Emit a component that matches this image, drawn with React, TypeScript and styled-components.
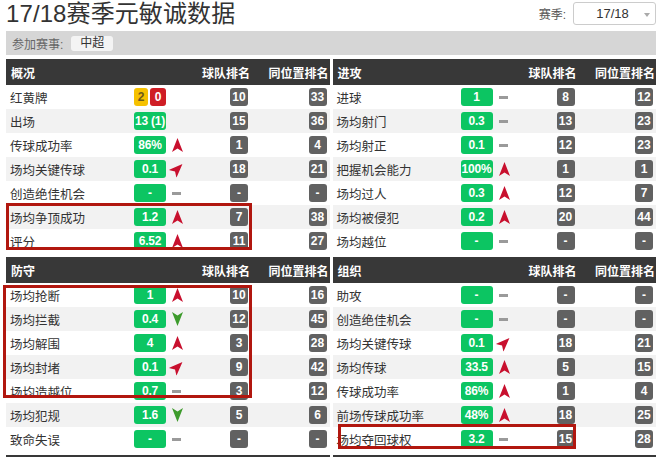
import styled, { createGlobalStyle } from 'styled-components'

type Trend = 'up' | 'down' | 'diag' | 'flat' | 'none'

interface Stat {
    label: string
    value?: string
    cards?: [string, string]
    trend: Trend
    team: string
    pos: string
}

interface Box {
    top: number
    left: number
    width: number
    height: number
}

interface Section {
    title: string
    stats: Stat[]
    highlight?: Box
}

const sections: Section[] = [
    {
        title: '概况',
        highlight: { top: 144, left: 0, width: 246, height: 47 },
        stats: [
            { label: '红黄牌', cards: ['2', '0'], trend: 'none', team: '10', pos: '33' },
            { label: '出场', value: '13 (1)', trend: 'none', team: '15', pos: '36' },
            { label: '传球成功率', value: '86%', trend: 'up', team: '1', pos: '4' },
            { label: '场均关键传球', value: '0.1', trend: 'diag', team: '18', pos: '21' },
            { label: '创造绝佳机会', value: '-', trend: 'flat', team: '-', pos: '-' },
            { label: '场均争顶成功', value: '1.2', trend: 'up', team: '7', pos: '38' },
            { label: '评分', value: '6.52', trend: 'up', team: '11', pos: '27' },
        ],
    },
    {
        title: '进攻',
        stats: [
            { label: '进球', value: '1', trend: 'flat', team: '8', pos: '12' },
            { label: '场均射门', value: '0.3', trend: 'flat', team: '13', pos: '23' },
            { label: '场均射正', value: '0.1', trend: 'flat', team: '12', pos: '23' },
            { label: '把握机会能力', value: '100%', trend: 'up', team: '1', pos: '1' },
            { label: '场均过人', value: '0.3', trend: 'up', team: '12', pos: '7' },
            { label: '场均被侵犯', value: '0.2', trend: 'up', team: '20', pos: '44' },
            { label: '场均越位', value: '-', trend: 'flat', team: '-', pos: '-' },
        ],
    },
    {
        title: '防守',
        highlight: { top: 28, left: -3, width: 249, height: 113 },
        stats: [
            { label: '场均抢断', value: '1', trend: 'up', team: '10', pos: '16' },
            { label: '场均拦截', value: '0.4', trend: 'down', team: '12', pos: '45' },
            { label: '场均解围', value: '4', trend: 'up', team: '3', pos: '28' },
            { label: '场均封堵', value: '0.1', trend: 'diag', team: '9', pos: '42' },
            { label: '场均造越位', value: '0.7', trend: 'flat', team: '3', pos: '12' },
            { label: '场均犯规', value: '1.6', trend: 'down', team: '5', pos: '6' },
            { label: '致命失误', value: '-', trend: 'flat', team: '-', pos: '-' },
        ],
    },
    {
        title: '组织',
        highlight: { top: 167, left: 5, width: 238, height: 25 },
        stats: [
            { label: '助攻', value: '-', trend: 'flat', team: '-', pos: '-' },
            { label: '创造绝佳机会', value: '-', trend: 'flat', team: '-', pos: '-' },
            { label: '场均关键传球', value: '0.1', trend: 'diag', team: '18', pos: '21' },
            { label: '场均传球', value: '33.5', trend: 'up', team: '5', pos: '15' },
            { label: '传球成功率', value: '86%', trend: 'up', team: '1', pos: '4' },
            { label: '前场传球成功率', value: '48%', trend: 'up', team: '18', pos: '25' },
            { label: '场均夺回球权', value: '3.2', trend: 'flat', team: '15', pos: '28' },
        ],
    },
]

// global
const GlobalStyle = createGlobalStyle`
    html, body {
        margin: 0;
        padding: 0;
        overflow: hidden;
        background: #fff;
    }
    body {
        font-family: "Liberation Sans", "Noto Sans CJK SC", Arial, sans-serif;
        color: #333;
    }
`

const Page = styled.div`
    width: 650px;
    padding-left: 6px;
`

const TitleRow = styled.div`
    display: flex;
    justify-content: space-between;
    align-items: flex-start;
    height: 31px;
`

const Title = styled.h1`
    margin: 0;
    font-size: 24px;
    line-height: 27px;
    font-weight: normal;
    color: #333;
    letter-spacing: 0.1px;
`

const SeasonPicker = styled.div`
    display: flex;
    align-items: center;
    gap: 7px;
    margin-top: 2px;
    font-size: 12px;
    color: #555;
`

const SelectBox = styled.div`
    position: relative;
    width: 77px;
    height: 21px;
    border: 1px solid #ccc;
    border-radius: 3px;
    display: flex;
    align-items: center;
    justify-content: center;
    padding-right: 4px;
    box-sizing: content-box;
    font-size: 13px;
    color: #333;

    &:after {
        content: '';
        position: absolute;
        right: 5px;
        top: 10px;
        border-left: 3px solid transparent;
        border-right: 3px solid transparent;
        border-top: 4px solid #aaa;
    }
`

const FilterBar = styled.div`
    display: flex;
    align-items: center;
    height: 24px;
    background: #d6d6d6;
    padding-left: 6px;
    font-size: 12px;
    color: #666;
`

const Tag = styled.span`
    margin-left: 8px;
    padding: 0 9px;
    height: 15px;
    line-height: 15px;
    background: #f4f4f4;
    border-radius: 3px;
    color: #333;
`

const Grid = styled.div`
    display: grid;
    grid-template-columns: 1fr 1fr;
    column-gap: 3px;
    row-gap: 4px;
    margin-top: 4px;
`

const Panel = styled.div`
    position: relative;
`

const columns = `
    display: grid;
    grid-template-columns: 128px 32px 32px 50px 1fr;
    align-items: center;
    padding-right: 3px;
`

const Head = styled.div`
    ${columns}
    height: 26px;
    background: #383838;
    color: #fff;
    font-size: 12px;
    font-weight: bold;
`

const HeadTitle = styled.span`
    grid-column: 1 / 4;
    padding-left: 5px;
`

const HeadCol = styled.span`
    text-align: right;
    white-space: nowrap;
    margin-right: -2px;
`

const Row = styled.div`
    ${columns}
    height: 24px;

    &:nth-child(even) {
        background: #f2f2f2;
    }
`

const Label = styled.span`
    padding-left: 4px;
    font-size: 12.5px;
    color: #333;
    white-space: nowrap;
`

const badge = `
    display: inline-flex;
    align-items: center;
    justify-content: center;
    height: 18px;
    border-radius: 3px;
    color: #fff;
    font-size: 12px;
    font-weight: bold;
    font-family: "Liberation Sans", Arial, sans-serif;
    white-space: nowrap;
`

const Value = styled.span`
    ${badge}
    width: 32px;
    background: #0cc562;
    letter-spacing: -0.2px;
`

const Cards = styled.span`
    display: flex;
    gap: 2px;
`

const Card = styled.span<{ $red?: boolean }>`
    ${badge}
    width: ${({ $red }) => ($red ? '19px' : '17px')};
    background: ${({ $red }) => ($red ? '#cf1d25' : '#f6c100')};
    color: ${({ $red }) => ($red ? '#fff' : '#6e5a1a')};
`

const TrendCell = styled.span`
    display: flex;
    align-items: center;
    padding-left: 6px;
`

const Dash = styled.span`
    width: 9px;
    height: 3px;
    background: #9a9a9a;
`

const Arrow = styled.svg<{ $turn: number }>`
    width: 11px;
    height: 14px;
    transform: rotate(${({ $turn }) => $turn}deg);
`

const Rank = styled.span`
    ${badge}
    justify-self: end;
    min-width: 18px;
    padding: 0 1px;
    box-sizing: border-box;
    background: #616161;
`

const Highlight = styled.div<{ $box: Box }>`
    position: absolute;
    top: ${({ $box }) => $box.top}px;
    left: ${({ $box }) => $box.left}px;
    width: ${({ $box }) => $box.width}px;
    height: ${({ $box }) => $box.height}px;
    box-sizing: border-box;
    border: 3px solid #b1170f;
    pointer-events: none;
`

const TrendIcon = ({ trend }: { trend: Trend }) => {
    if (trend === 'none') return null
    if (trend === 'flat') return <Dash />
    const turn = trend === 'down' ? 180 : trend === 'diag' ? 45 : 0
    const color = trend === 'down' ? '#3d9b2c' : '#c8102e'
    return (
        <Arrow $turn={turn} viewBox="0 0 11 14">
            <path d="M5.5 0 L11 14 L5.5 10.5 L0 14 Z" fill={color} />
        </Arrow>
    )
}

const StatRow = ({ stat }: { stat: Stat }) => (
    <Row>
        <Label>{stat.label}</Label>
        {stat.cards ? (
            <Cards>
                <Card>{stat.cards[0]}</Card>
                <Card $red>{stat.cards[1]}</Card>
            </Cards>
        ) : (
            <Value>{stat.value}</Value>
        )}
        <TrendCell>
            <TrendIcon trend={stat.trend} />
        </TrendCell>
        <Rank>{stat.team}</Rank>
        <Rank>{stat.pos}</Rank>
    </Row>
)

const StatPanel = ({ section }: { section: Section }) => (
    <Panel>
        <Head>
            <HeadTitle>{section.title}</HeadTitle>
            <HeadCol>球队排名</HeadCol>
            <HeadCol>同位置排名</HeadCol>
        </Head>
        <div>
            {section.stats.map((s) => (
                <StatRow key={s.label} stat={s} />
            ))}
        </div>
        {section.highlight && <Highlight $box={section.highlight} />}
    </Panel>
)

const App = () => {
    return (
        <Page>
            <GlobalStyle />
            <TitleRow>
                <Title>17/18赛季元敏诚数据</Title>
                <SeasonPicker>
                    赛季:
                    <SelectBox>17/18</SelectBox>
                </SeasonPicker>
            </TitleRow>
            <FilterBar>
                参加赛事:
                <Tag>中超</Tag>
            </FilterBar>
            <Grid>
                {sections.map((s) => (
                    <StatPanel key={s.title} section={s} />
                ))}
                <Panel>
                    <Head />
                </Panel>
                <Panel>
                    <Head />
                </Panel>
            </Grid>
        </Page>
    )
}

export default App
